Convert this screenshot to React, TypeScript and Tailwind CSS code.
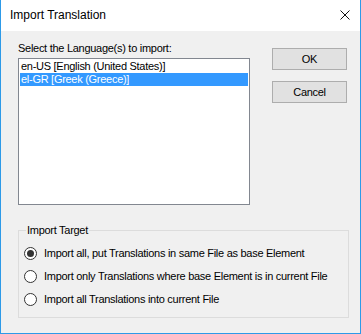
import { useState } from 'react';

const OPTIONS = [
  'Import all, put Translations in same File as base Element',
  'Import only Translations where base Element is in current File',
  'Import all Translations into current File',
];

const LANGUAGES = ['en-US [English (United States)]', 'el-GR [Greek (Greece)]'];

function Radio({ checked }: { checked: boolean }) {
  return (
    <span className="flex h-[13px] w-[13px] shrink-0 items-center justify-center rounded-full border border-[#333333] bg-white">
      {checked && <span className="h-[7px] w-[7px] rounded-full bg-[#333333]" />}
    </span>
  );
}

export default function App() {
  const [lang, setLang] = useState(1);
  const [target, setTarget] = useState(0);

  return (
    <div
      className="flex h-[334px] w-[361px] flex-col text-[11px] leading-[13px] tracking-[-0.28px] text-black"
      style={{ fontFamily: '"Liberation Sans", Arial, sans-serif' }}
    >
      {/* Title bar */}
      <div className="flex h-[31px] items-center justify-between border-x border-[#2d9ae8] bg-white pl-[9px] pr-[10px]">
        <span className="text-[12px] tracking-normal text-black">Import Translation</span>
        <svg width="10" height="10" viewBox="0 0 10 10" className="mt-[-1px]">
          <path d="M0.5 0.5 L9.5 9.5 M9.5 0.5 L0.5 9.5" stroke="#111" strokeWidth="1" />
        </svg>
      </div>

      {/* Body */}
      <div className="flex flex-1 flex-col border-x border-b border-[#2d9ae8] bg-[#f0f0f0] pl-[17px] pr-[12px]">
        <div className="flex gap-[22px]">
          <div className="flex w-[232px] flex-col">
            <label className="mt-[11px] block">Select the Language(s) to import:</label>
            <div className="mt-[3px] h-[147px] border border-[#828790] bg-white p-[1px]">
              {LANGUAGES.map((l, i) => (
                <div
                  key={l}
                  onClick={() => setLang(i)}
                  className={`h-[13px] pl-[1px] ${lang === i ? 'bg-[#3399ff] text-white' : 'text-black'}`}
                >
                  {l}
                </div>
              ))}
            </div>
          </div>
          <div className="flex flex-col gap-[11px] pt-[17px]">
            <button className="h-[22px] w-[75px] border border-[#adadad] bg-[#e1e1e1] text-[11px]">OK</button>
            <button className="h-[22px] w-[75px] border border-[#adadad] bg-[#e1e1e1] text-[11px]">Cancel</button>
          </div>
        </div>

        <fieldset className="mt-[19px] h-[94px] w-[331px] border border-[#dcdcdc] pl-[5px]">
          <legend className="ml-[2px] px-[1px]">Import Target</legend>
          <div className="mt-[10px] flex flex-col gap-[10px]">
            {OPTIONS.map((o, i) => (
              <div key={o} className="flex items-center gap-[7px]" onClick={() => setTarget(i)}>
                <Radio checked={target === i} />
                <span>{o}</span>
              </div>
            ))}
          </div>
        </fieldset>
      </div>
    </div>
  );
}
